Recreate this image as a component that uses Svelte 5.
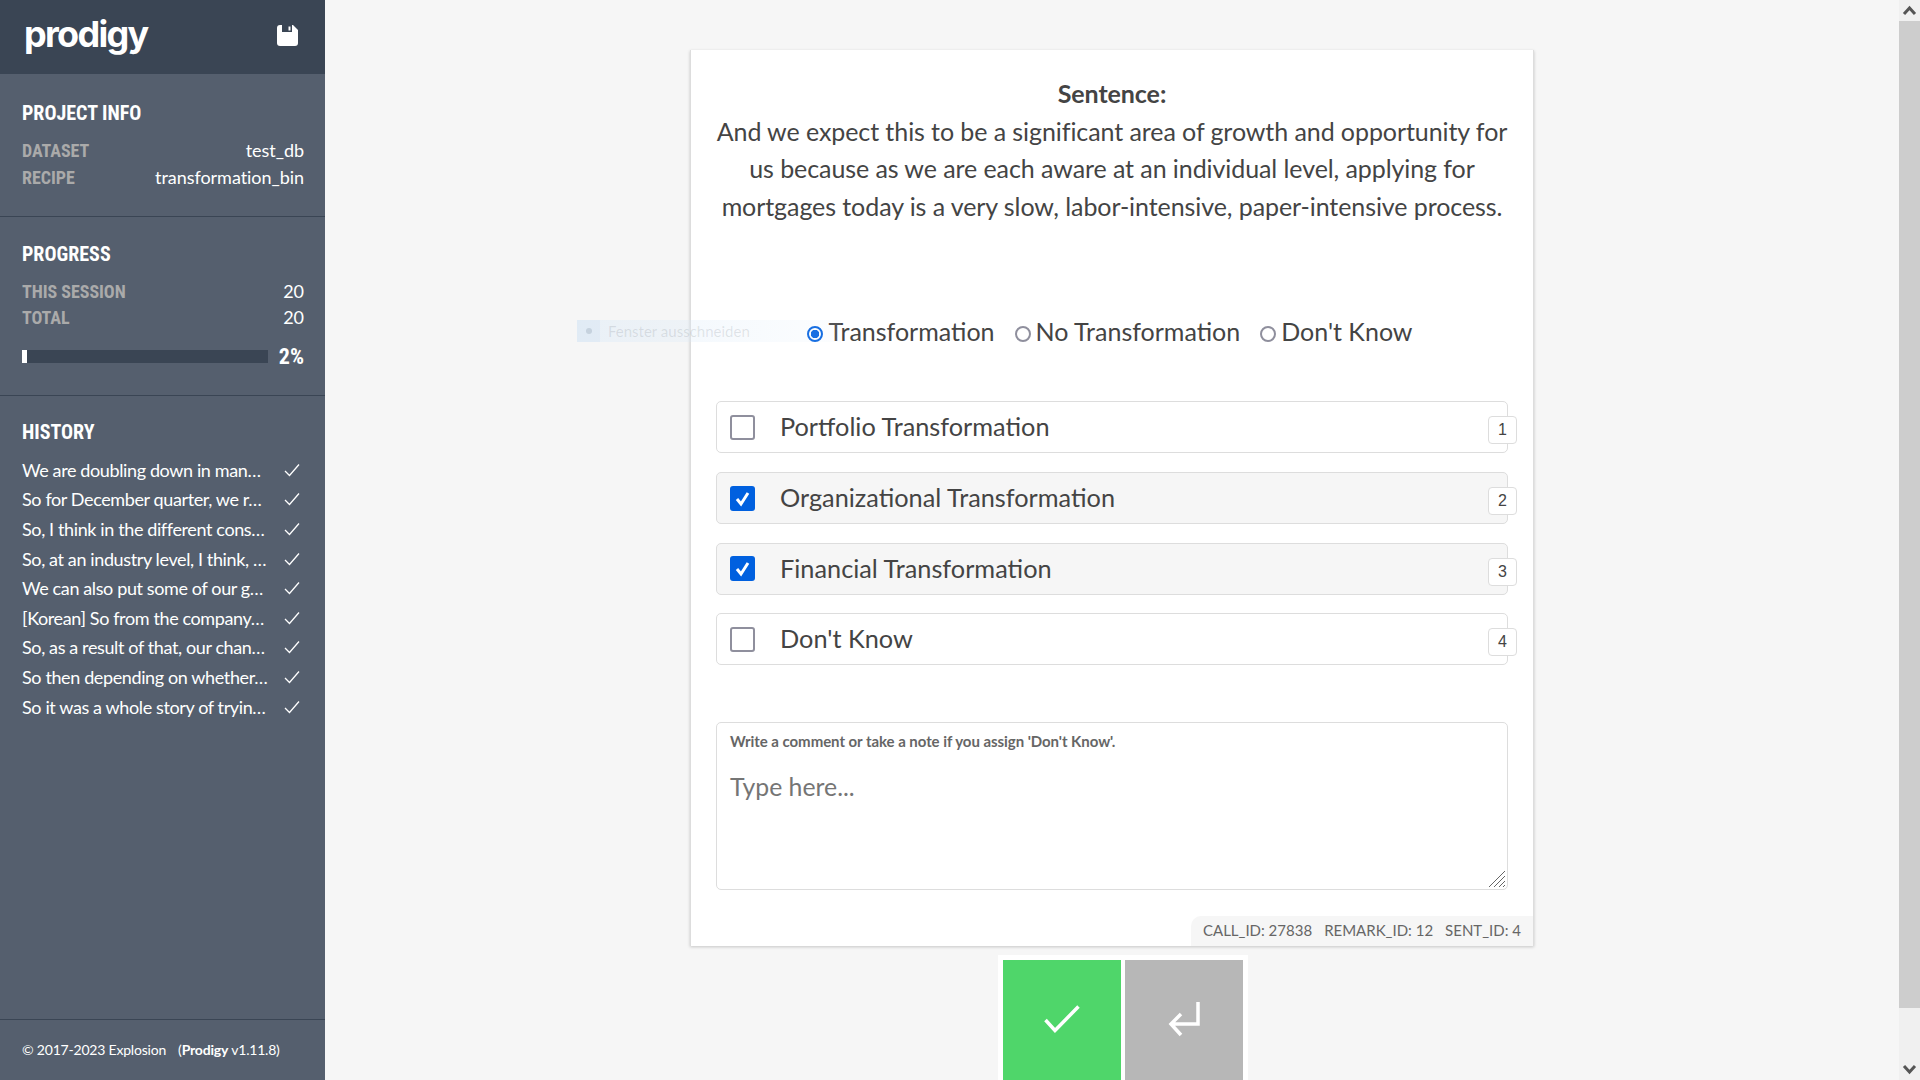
<script lang="ts">
    const history = [
        'We are doubling down in man…',
        'So for December quarter, we r…',
        'So, I think in the different cons…',
        'So, at an industry level, I think, …',
        'We can also put some of our g…',
        '[Korean] So from the company…',
        'So, as a result of that, our chan…',
        'So then depending on whether…',
        'So it was a whole story of tryin…'
    ]
    const radios = ['Transformation', 'No Transformation', "Don't Know"]
    const options = [
        { label: 'Portfolio Transformation', checked: false },
        { label: 'Organizational Transformation', checked: true },
        { label: 'Financial Transformation', checked: true },
        { label: "Don't Know", checked: false }
    ]
</script>

<div class="page">
    <aside class="sidebar">
        <header class="logo-bar">
            <span class="logo">prodigy</span>
            <svg class="save" viewBox="0 0 21 21" width="21" height="21">
                <path fill="#fff" d="M3 0h13l5 5v13a3 3 0 0 1-3 3H3a3 3 0 0 1-3-3V3a3 3 0 0 1 3-3z"/>
                <path fill="#3a4554" d="M5 0h10v7H5z"/>
                <path fill="#fff" d="M11.500 1.500h2v4h-2z"/>
            </svg>
        </header>

        <section class="block info">
            <h2>Project Info</h2>
            <div class="row"><span class="key">Dataset</span><span>test_db</span></div>
            <div class="row"><span class="key">Recipe</span><span>transformation_bin</span></div>
        </section>

        <section class="block progress">
            <h2>Progress</h2>
            <div class="row"><span class="key">This session</span><span>20</span></div>
            <div class="row"><span class="key">Total</span><span>20</span></div>
            <div class="bar-row">
                <div class="bar"><div class="fill" style="width: 2%"></div></div>
                <span class="percent">2%</span>
            </div>
        </section>

        <section class="block history">
            <h2>History</h2>
            <ul>
                {#each history as item}
                    <li>
                        <span>{item}</span>
                        <svg viewBox="0 0 16 14" width="16" height="14"><path d="M1 8l4.500 4.500L15 1.500" fill="none" stroke="#fff" stroke-width="1.300"/></svg>
                    </li>
                {/each}
            </ul>
        </section>

        <footer class="credits">© 2017-2023 Explosion <span class="version">(<b>Prodigy</b> v1.11.8)</span></footer>
    </aside>

    <main class="content">
        <div class="ghost"><i><u></u></i><span>Fenster ausschneiden</span></div>

        <article class="card">
            <div class="sentence">
                <strong>Sentence:</strong><br>
                And we expect this to be a significant area of growth and opportunity for us because as we are each aware at an individual level, applying for mortgages today is a very slow, labor-intensive, paper-intensive process.
            </div>

            <div class="radios">
                {#each radios as radio, i}
                    <label><span class="radio" class:on={i === 0}></span>{radio}</label>
                {/each}
            </div>

            <div class="options">
                {#each options as option, i}
                    <div class="option" class:checked={option.checked}>
                        <span class="box">
                            {#if option.checked}
                                <svg viewBox="0 0 25 25" width="25" height="25"><path d="M7 13l4 5 7-11" fill="none" stroke="#fff" stroke-width="3"/></svg>
                            {/if}
                        </span>
                        <span class="option-label">{option.label}</span>
                        <kbd>{i + 1}</kbd>
                    </div>
                {/each}
            </div>

            <div class="note">
                <div class="note-label">Write a comment or take a note if you assign 'Don't Know'.</div>
                <div class="placeholder">Type here...</div>
                <svg class="grip" viewBox="0 0 18 18" width="18" height="18"><path d="M1 17L17 1M6 17L17 6M11 17l6-6M15 17l2-2" stroke="#666" stroke-width="1"/></svg>
            </div>

            <div class="meta"><span>CALL_ID: 27838</span><span>REMARK_ID: 12</span><span>SENT_ID: 4</span></div>
        </article>

        <div class="actions">
            <button type="button" class="accept" aria-label="accept">
                <svg viewBox="0 0 36 28" width="36" height="28"><path d="M1.500 15l9.500 10.500L34.500 1.500" fill="none" stroke="#fff" stroke-width="3.500"/></svg>
            </button>
            <button type="button" class="undo" aria-label="undo">
                <svg viewBox="0 0 32 36" width="32" height="36"><path d="M30 1v22H4M13 13L3 23l10 11" fill="none" stroke="#fff" stroke-width="3.500"/></svg>
            </button>
        </div>
    </main>

    <div class="scrollbar">
        <svg viewBox="0 0 21 21" width="21" height="21"><path d="M5 14l5.500-6L16 14" fill="none" stroke="#555" stroke-width="3"/></svg>
        <div class="track"><div class="thumb"></div></div>
        <svg viewBox="0 0 21 21" width="21" height="21"><path d="M5 7l5.500 6L16 7" fill="none" stroke="#555" stroke-width="3"/></svg>
    </div>
</div>

<style>
    :global(body) {
        margin: 0;
        font-family: Lato, sans-serif;
        color: #444;
        background: #f6f6f6;
    }
    .page {
        display: flex;
        height: 1080px;
        overflow: hidden;
    }

    .sidebar {
        width: 325px;
        flex: none;
        display: flex;
        flex-direction: column;
        background: #555f6e;
        color: #fff;
        font-size: 18px;
    }
    .logo-bar {
        height: 74px;
        flex: none;
        display: flex;
        align-items: center;
        justify-content: space-between;
        padding: 0 27px 0 24px;
        background: #3a4554;
    }
    .logo {
        font-family: Inter, sans-serif;
        font-weight: 700;
        font-size: 36px;
        letter-spacing: -1.700px;
        margin-top: -6px;
    }
    .save {
        margin-top: -3px;
    }
    .block {
        padding: 27px 21px 0 22px;
    }
    .block h2 {
        margin: 0 0 12px;
        font-family: Roboto, sans-serif;
        font-stretch: 75%;
        font-size: 20px;
        line-height: 24px;
        font-weight: 700;
        text-transform: uppercase;
    }
    .info, .progress {
        border-bottom: 1px solid #3a4554;
    }
    .info {
        height: 115px;
    }
    .progress {
        height: 153px;
        padding-top: 24.500px;
    }
    .row {
        display: flex;
        justify-content: space-between;
        height: 26.500px;
        line-height: 26.500px;
        letter-spacing: -0.050px;
    }
    .key {
        position: relative;
        top: 1px;
        font-family: Roboto, sans-serif;
        font-stretch: 75%;
        font-weight: 700;
        text-transform: uppercase;
        color: #aaa;
    }
    .bar-row {
        display: flex;
        align-items: center;
        justify-content: space-between;
        margin-top: 15px;
    }
    .bar {
        width: 246px;
        height: 13px;
        background: #3a4554;
    }
    .fill {
        height: 100%;
        background: #fff;
    }
    .percent {
        font-family: Roboto, sans-serif;
        font-stretch: 75%;
        font-size: 22px;
        line-height: 22px;
        font-weight: 700;
    }
    .history {
        flex: 1;
        padding-top: 24.500px;
    }
    .history h2 {
        margin-bottom: 11px;
    }
    .history ul {
        list-style: none;
        margin: 0;
        padding: 0;
    }
    .history li {
        display: flex;
        align-items: center;
        justify-content: space-between;
        height: 29.600px;
        padding-right: 4px;
        white-space: nowrap;
        letter-spacing: -0.380px;
    }
    .credits {
        height: 61px;
        flex: none;
        display: flex;
        align-items: center;
        gap: 12px;
        padding: 0 0 2px 22px;
        box-sizing: border-box;
        border-top: 1px solid #3a4554;
        font-size: 14px;
        letter-spacing: -0.200px;
    }

    .content {
        position: relative;
        flex: 1;
        display: flex;
        flex-direction: column;
        align-items: center;
        padding: 50px 0 0;
    }
    .ghost {
        position: absolute;
        left: 252px;
        top: 320px;
        width: 264px;
        height: 22px;
        display: flex;
        align-items: center;
        z-index: 1;
        font-size: 15px;
        color: rgba(90, 100, 110, 0.16);
        background: linear-gradient(90deg, rgba(215, 232, 248, 0.4), rgba(215, 232, 248, 0.08));
    }
    .ghost i {
        box-sizing: border-box;
        display: flex;
        align-items: center;
        justify-content: center;
        width: 23px;
        height: 22px;
        margin-right: 8px;
        background: rgba(190, 215, 240, 0.2);
    }
    .ghost u {
        width: 6px;
        height: 6px;
        border-radius: 50%;
        background: rgba(90, 110, 130, 0.2);
    }
    .card {
        position: relative;
        flex: none;
        box-sizing: border-box;
        width: 844px;
        height: 896px;
        padding: 25px 25px 0;
        background: #fff;
        border: 1px solid #ddd;
        border-width: 0 1px;
        box-shadow: 0 1px 3px rgba(0, 0, 0, 0.2);
    }
    .sentence {
        margin: 0 -6px;
        font-size: 25px;
        line-height: 37.500px;
        letter-spacing: -0.080px;
        text-align: center;
    }
    .radios {
        display: flex;
        justify-content: center;
        gap: 20px;
        margin-top: 88px;
        padding-right: 4px;
        font-size: 25px;
        line-height: 37px;
    }
    .radios label {
        display: flex;
        align-items: center;
        gap: 5px;
    }
    .radio {
        box-sizing: border-box;
        width: 16px;
        height: 16px;
        margin-top: 5px;
        border: 2px solid #8f8f9d;
        border-radius: 50%;
    }
    .radio.on {
        border: 2px solid #0060df;
        background: radial-gradient(circle, #0060df 0 4px, #fff 4.500px);
    }
    .options {
        margin-top: 51.400px;
    }
    .option {
        position: relative;
        box-sizing: border-box;
        display: flex;
        align-items: center;
        height: 52px;
        margin-bottom: 18.670px;
        padding-left: 13px;
        border: 1px solid #ddd;
        border-radius: 5px;
        font-size: 25.300px;
    }
    .option.checked {
        background: #f6f6f6;
    }
    .option-label {
        position: relative;
        top: -1px;
    }
    .box {
        box-sizing: border-box;
        width: 25px;
        height: 25px;
        margin-right: 25px;
        border: 2px solid #8f8f9d;
        border-radius: 3px;
        background: #fff;
    }
    .checked .box {
        border: 0;
        background: #0060df;
    }
    .box svg {
        display: block;
    }
    kbd {
        position: absolute;
        right: -10px;
        top: 14px;
        box-sizing: border-box;
        width: 29px;
        height: 28px;
        border: 1px solid #ddd;
        border-radius: 4px;
        background: #fff;
        font-family: "Liberation Sans", sans-serif;
        font-size: 16px;
        line-height: 26px;
        text-align: center;
    }
    .note {
        position: relative;
        box-sizing: border-box;
        height: 168px;
        margin-top: 56.600px;
        padding: 8px 13px;
        border: 1px solid #ddd;
        border-radius: 5px;
    }
    .note-label {
        font-size: 15px;
        font-weight: 700;
        line-height: 20px;
        letter-spacing: -0.050px;
        color: #666;
    }
    .placeholder {
        margin-top: 18px;
        font-size: 24.800px;
        line-height: 36px;
        color: #757575;
    }
    .grip {
        position: absolute;
        right: 1px;
        bottom: 1px;
    }
    .meta {
        position: absolute;
        right: 0;
        bottom: 0;
        box-sizing: border-box;
        display: flex;
        gap: 12px;
        align-items: center;
        height: 30px;
        padding: 0 12px 2px;
        border-top-left-radius: 10px;
        background: #f6f6f6;
        font-size: 15px;
        color: #666;
    }
    .actions {
        display: flex;
        gap: 4px;
        flex: none;
        margin: 9px 0 0 22px;
        padding: 5px 5px 0;
        background: #fff;
    }
    .actions button {
        width: 118px;
        height: 130px;
        border: 0;
        padding: 0 0 12px;
        display: flex;
        align-items: center;
        justify-content: center;
    }
    .accept {
        background: #4fd66a;
    }
    .undo {
        background: #b7b7b7;
    }

    .scrollbar {
        width: 21px;
        flex: none;
        display: flex;
        flex-direction: column;
        background: #f0f0f0;
    }
    .scrollbar svg {
        flex: none;
    }
    .track {
        flex: 1;
    }
    .thumb {
        height: 987px;
        background: #cdcdcd;
    }
</style>
